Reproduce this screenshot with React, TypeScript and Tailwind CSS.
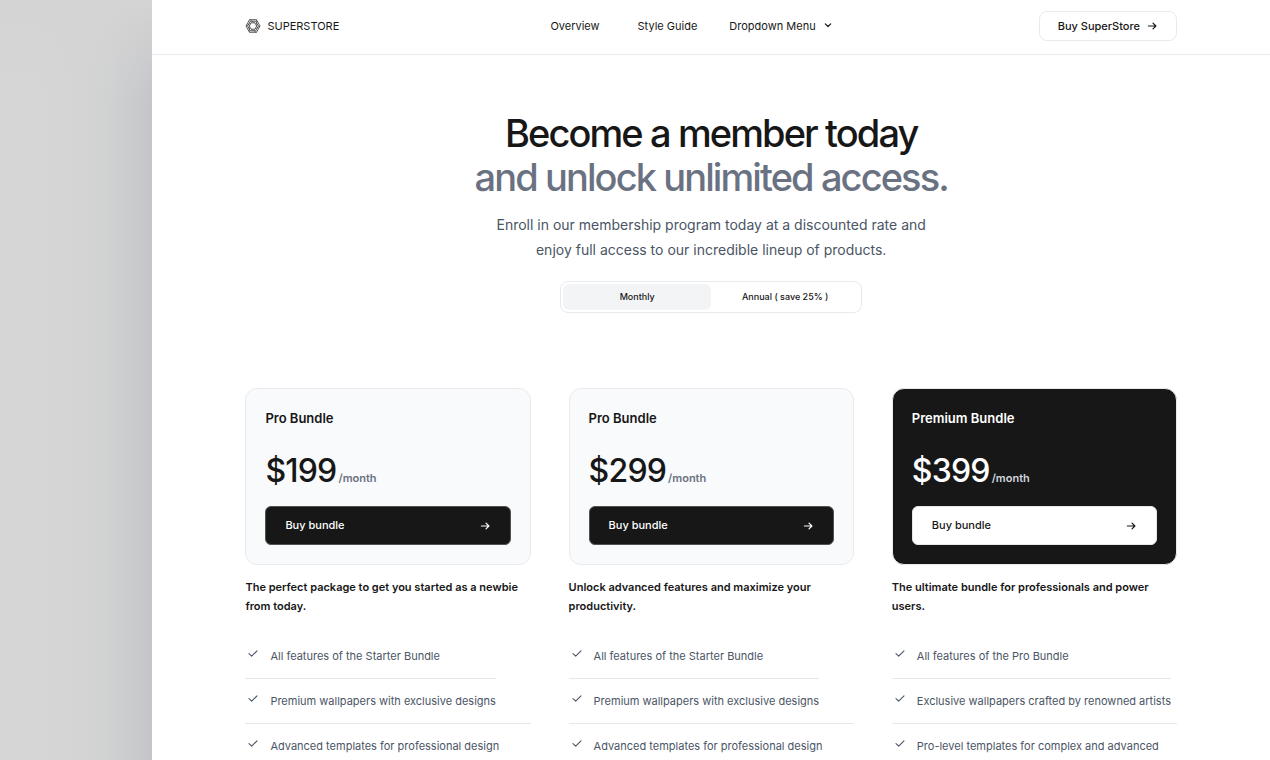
import { useState } from "react";

type Plan = {
  name: string;
  monthly: string;
  annual: string;
  summary: string;
  features: string[];
  featured?: boolean;
};

const plans: Plan[] = [
  {
    name: "Pro Bundle",
    monthly: "$199",
    annual: "$149",
    summary: "The perfect package to get you started as a newbie from today.",
    features: [
      "All features of the Starter Bundle",
      "Premium wallpapers with exclusive designs",
      "Advanced templates for professional design",
    ],
  },
  {
    name: "Pro Bundle",
    monthly: "$299",
    annual: "$224",
    summary: "Unlock advanced features and maximize your productivity.",
    features: [
      "All features of the Starter Bundle",
      "Premium wallpapers with exclusive designs",
      "Advanced templates for professional design",
    ],
  },
  {
    name: "Premium Bundle",
    monthly: "$399",
    annual: "$299",
    summary: "The ultimate bundle for professionals and power users.",
    features: [
      "All features of the Pro Bundle",
      "Exclusive wallpapers crafted by renowned artists",
      "Pro-level templates for complex and advanced",
    ],
    featured: true,
  },
];

function Arrow() {
  return (
    <svg className="size-3 shrink-0" viewBox="0 0 12 12" fill="none" stroke="currentColor" strokeWidth="1.2" strokeLinecap="round" strokeLinejoin="round" aria-hidden="true">
      <path d="M2.400 6h7.500M7 3.100 9.900 6 7 8.900" />
    </svg>
  );
}

function Chevron() {
  return (
    <svg className="size-3" viewBox="0 0 12 12" fill="none" stroke="currentColor" strokeWidth="1.2" strokeLinecap="round" strokeLinejoin="round" aria-hidden="true">
      <path d="m3.300 3.800 2.700 2.700L8.700 3.800" />
    </svg>
  );
}

function Check() {
  return (
    <svg className="h-4 w-4 shrink-0" viewBox="0 0 16 16" fill="none" stroke="currentColor" strokeWidth="1.100" strokeLinecap="round" strokeLinejoin="round" aria-hidden="true">
      <path d="m4 7.700 2.700 2.500L12 4.800" />
    </svg>
  );
}

function Logo() {
  return (
    <svg className="h-4 w-4" viewBox="0 0 16 16" fill="none" stroke="currentColor" strokeWidth="0.7" strokeLinejoin="round" aria-hidden="true">
      <path d="M4.500 1.700h7L15 8l-3.500 6.300h-7L1 8z" />
      <path d="M5.300 3.200h5.400L13.400 8l-2.700 4.800H5.300L2.600 8z" />
      <path d="M6.200 4.800h3.600L11.700 8l-1.900 3.200H6.200L4.300 8z" />
      <path strokeWidth="0.4" d="M4.500 1.700 9.800 4.800M11.500 1.700l.2 6.300M15 8l-5.200 3.200M11.500 14.300l-5.300-3.100M4.500 14.300 4.300 8M1 8l5.200-3.200" />
    </svg>
  );
}

function PlanColumn({ plan, annual }: { plan: Plan; annual: boolean }) {
  return (
    <article>
      <div className={plan.featured ? "rounded-xl border border-[#e8eaed] bg-[#171717] p-[19px] text-white" : "rounded-xl border border-[#e8eaed] bg-gray-50 p-[19px]"}>
        <h2 className="text-[13px] leading-5 font-semibold">{plan.name}</h2>
        <p className="mt-6 flex items-baseline gap-0.5">
          <span className="text-[32px] leading-[38px] font-medium tracking-tight">{annual ? plan.annual : plan.monthly}</span>
          <span className={plan.featured ? "text-[11px] font-semibold text-gray-300" : "text-[11px] font-semibold text-gray-500"}>/month</span>
        </p>
        <button
          type="button"
          className={
            plan.featured
              ? "mt-4 flex h-[39px] w-full items-center justify-between rounded-md border border-gray-200 bg-white px-[19px] text-[11px] font-medium text-[#171717]"
              : "mt-4 flex h-[39px] w-full items-center justify-between rounded-md border border-neutral-600 bg-[#171717] px-[19px] text-[11px] font-medium text-white"
          }
        >
          Buy bundle
          <Arrow />
        </button>
      </div>
      <p className="mt-[13px] text-[11px] leading-[19px] font-semibold">{plan.summary}</p>
      <ul className="mt-[18px] flex flex-col items-start text-[11px] text-gray-600">
        {plan.features.map((feature) => (
          <li key={feature} className="flex items-start gap-[9px] border-t border-[#e5e7eb] py-3 first:border-t-0 last:w-full last:pb-0">
            <Check />
            <span className="pt-px leading-[19px]">{feature}</span>
          </li>
        ))}
      </ul>
    </article>
  );
}

export default function App() {
  const [annual, setAnnual] = useState(false);

  return (
    <div className="flex min-h-screen bg-[#d6d6d6] font-['Inter',sans-serif] text-[#171717]">
      <div className="w-[12%] shrink-0 bg-[linear-gradient(to_bottom,#d4d4d4_0,#d4d4d400_100px),linear-gradient(to_right,#d6d6d6_25%,#d3d4d3_55%,#d0d2d1_72%,#cdced0_79%,#c9cacc_90%,#c4c5ca_100%)]" />
      <div className="min-w-0 flex-1 bg-white">
        <header className="border-b border-[#e8eaed] px-[93px]">
          <div className="flex h-[54px] items-center justify-between pb-0.5">
            <a href="#home" className="flex items-center gap-1.5 text-[11px]">
              <Logo />
              SUPERSTORE
            </a>
            <nav className="ml-1.5 flex items-center text-[11px]">
              <a href="#overview" className="mr-[38px]">Overview</a>
              <a href="#style-guide" className="mr-8">Style Guide</a>
              <button type="button" className="flex items-center gap-1.5">
                Dropdown Menu
                <Chevron />
              </button>
            </nav>
            <a href="#buy" className="flex h-[30px] items-center gap-1.5 rounded-lg border border-[#e8eaed] px-[18px] text-[11px] font-medium">
              Buy SuperStore
              <Arrow />
            </a>
          </div>
        </header>

        <main className="px-[93px] pt-14">
          <section className="flex flex-col items-center text-center">
            <h1 className="text-[38px] leading-[44px] font-medium tracking-tighter">
              Become a member today
              <span className="block text-gray-500">and unlock unlimited access.</span>
            </h1>
            <p className="mt-[13px] max-w-[460px] text-[14px] leading-[25px] text-gray-600">
              Enroll in our membership program today at a discounted rate and enjoy full access to our incredible lineup of products.
            </p>
            <div className="mt-[19px] grid w-[302px] grid-cols-2 rounded-lg border border-[#e8eaed] p-0.5 text-[9px] font-medium">
              <button type="button" aria-pressed={!annual} onClick={() => setAnnual(false)} className={annual ? "h-[26px] rounded-md" : "h-[26px] rounded-md bg-gray-100"}>
                Monthly
              </button>
              <button type="button" aria-pressed={annual} onClick={() => setAnnual(true)} className={annual ? "h-[26px] rounded-md bg-gray-100" : "h-[26px] rounded-md"}>
                Annual ( save 25% )
              </button>
            </div>
          </section>

          <section className="mt-[75px] grid grid-cols-3 gap-[38px]">
            {plans.map((plan) => (
              <PlanColumn key={plan.monthly} plan={plan} annual={annual} />
            ))}
          </section>
        </main>
      </div>
    </div>
  );
}
